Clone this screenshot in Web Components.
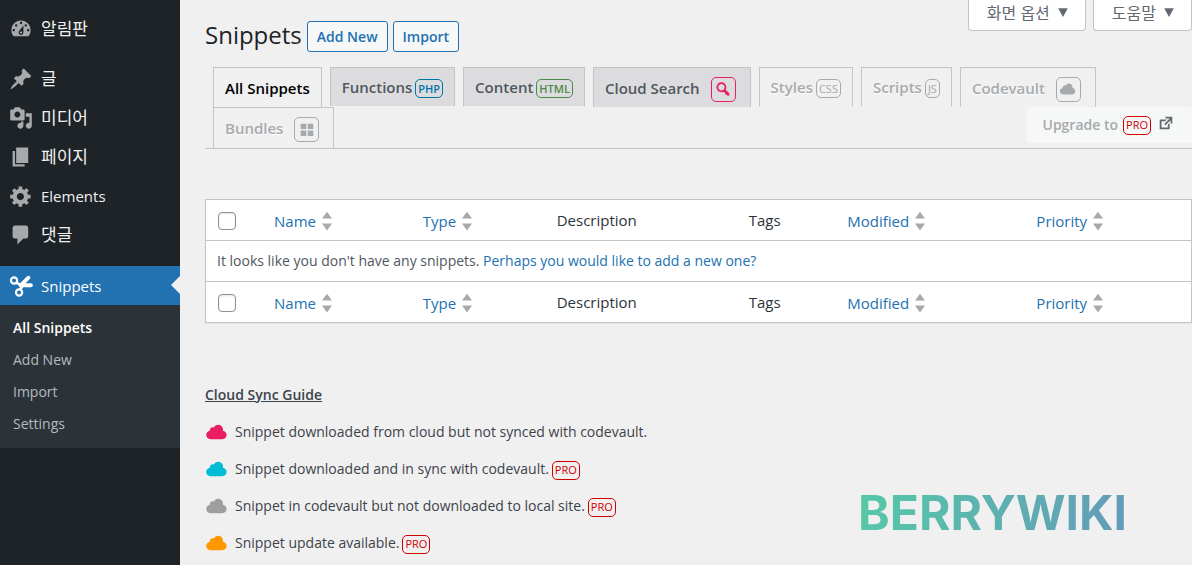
<!DOCTYPE html>
<html lang="ko">
<head>
<meta charset="utf-8">
<meta name="viewport" content="width=device-width, initial-scale=1">
<title>Snippets</title>
<style>
  body { margin: 0; background: #f0f0f1; color: #3c434a; font: 15px/20px "Open Sans", "Noto Sans CJK KR", sans-serif; }
</style>
</head>
<body>
<admin-shell>
  <side-menu slot="menu"></side-menu>
  <snippets-page></snippets-page>
</admin-shell>

<script>
const ICONS = {
  dashboard: '<path d="M3.76 16h12.48c1.1-1.37 1.76-3.11 1.76-5 0-4.42-3.58-8-8-8s-8 3.58-8 8c0 1.89.66 3.63 1.76 5zM10 4c.55 0 1 .45 1 1s-.45 1-1 1-1-.45-1-1 .45-1 1-1zM6 6c.55 0 1 .45 1 1s-.45 1-1 1-1-.45-1-1 .45-1 1-1zm8 0c.55 0 1 .45 1 1s-.45 1-1 1-1-.45-1-1 .45-1 1-1zm-5.37 5.55L12 7v6c0 1.1-.9 2-2 2s-2-.9-2-2c0-.57.24-1.08.63-1.45zM4 10c.55 0 1 .45 1 1s-.45 1-1 1-1-.45-1-1 .45-1 1-1zm12 0c.55 0 1 .45 1 1s-.45 1-1 1-1-.45-1-1 .45-1 1-1zm-5 3c0-.55-.45-1-1-1s-1 .45-1 1 .45 1 1 1 1-.45 1-1z"/>',
  pin: '<path d="M10.44 3.02l1.82-1.82 6.36 6.35-1.83 1.82c-1.05-.68-2.48-.57-3.41.36l-.75.75c-.92.93-1.04 2.35-.35 3.41l-1.83 1.82-2.41-2.41-2.8 2.79c-.42.42-3.38 2.71-3.8 2.29s1.86-3.39 2.28-3.81l2.79-2.79L4.1 9.36l1.83-1.82c1.05.69 2.48.57 3.4-.36l.75-.75c.93-.92 1.05-2.35.36-3.41z"/>',
  media: '<path d="M13 11V4c0-.55-.45-1-1-1h-1.67L9 1H5L3.67 3H2c-.55 0-1 .45-1 1v7c0 .55.45 1 1 1h10c.55 0 1-.45 1-1zM7 4.5c1.38 0 2.5 1.12 2.5 2.5S8.38 9.5 7 9.5 4.5 8.38 4.5 7 5.62 4.5 7 4.5zM14 6h5v10.5c0 1.38-1.12 2.5-2.5 2.5S14 17.88 14 16.5s1.12-2.5 2.5-2.5c.17 0 .34.02.5.05V9h-3V6zm-4 8.05V13h2v3.5c0 1.38-1.12 2.5-2.5 2.5S7 17.88 7 16.5 8.12 14 9.5 14c.17 0 .34.02.5.05z"/>',
  page: '<path d="M6 15V2h10v13H6zm-1 1h8v2H3V5h2v11z"/>',
  gear: '<path d="M18 12h-2.18c-.17.7-.44 1.35-.81 1.93l1.54 1.54-2.1 2.1-1.54-1.54c-.58.36-1.23.63-1.91.79V19H8v-2.18c-.68-.16-1.33-.43-1.91-.79l-1.54 1.54-2.12-2.12 1.54-1.54c-.36-.58-.63-1.23-.79-1.91H1V9.03h2.17c.16-.7.44-1.35.8-1.94L2.43 5.55l2.1-2.1 1.54 1.54c.58-.37 1.24-.64 1.93-.81V2h3v2.18c.68.16 1.33.43 1.91.79l1.54-1.54 2.12 2.12-1.54 1.54c.36.59.64 1.24.8 1.94H18V12zm-8.5 1.5c1.66 0 3-1.34 3-3s-1.34-3-3-3-3 1.34-3 3 1.34 3 3 3z"/>',
  comment: '<path d="M5 2h9c1.1 0 2 .9 2 2v7c0 1.1-.9 2-2 2h-2l-5 5v-5H5c-1.1 0-2-.9-2-2V4c0-1.1.9-2 2-2z"/>',
  scissors: '<g fill="none" stroke="currentColor"><g stroke-width="1.8"><circle cx="4.2" cy="5.4" r="2.6"/><circle cx="8.4" cy="15.4" r="2.6"/></g><g stroke-linecap="round" stroke-width="3.2"><path d="M9.6 9.6L16.2 3.1"/><path d="M11 9.4L18.2 9.4"/></g><path stroke-width="2.2" d="M5.8 7.2L11 9.6M9.2 13.2L11.4 9.8"/></g>',
  cloud: '<path d="M14.9 9c1.8.2 3.1 1.7 3.1 3.5 0 1.9-1.6 3.5-3.5 3.5h-10C2.6 16 1 14.4 1 12.5 1 10.7 2.3 9.3 4.1 9 4 8.9 4 8.7 4 8.5 4 7.1 5.1 6 6.5 6c.3 0 .7.1.9.2C8.1 4.9 9.4 4 11 4c2.2 0 4 1.8 4 4 0 .4-.1.7-.1 1z"/>',
  search: '<path d="M12.14 4.18c1.87 1.87 2.11 4.75.72 6.89.12.1.22.21.36.31.2.16.47.36.81.59.34.24.56.39.66.47.42.31.73.57.94.78.32.32.6.65.84 1 .25.35.44.69.59 1.04.14.35.21.68.18 1-.02.32-.14.59-.36.81s-.49.34-.81.36c-.31.02-.65-.04-.99-.19-.35-.14-.7-.34-1.04-.59-.35-.24-.68-.52-1-.84-.21-.21-.47-.52-.77-.93-.1-.13-.25-.35-.47-.66-.22-.32-.4-.57-.56-.78-.16-.2-.29-.35-.44-.5-2.07 1.09-4.69.76-6.44-.98-2.14-2.15-2.14-5.64 0-7.78 2.15-2.15 5.63-2.15 7.78 0zm-1.41 6.36c1.36-1.37 1.36-3.58 0-4.95-1.37-1.37-3.59-1.37-4.95 0-1.37 1.37-1.37 3.58 0 4.95 1.36 1.37 3.58 1.37 4.95 0z"/>',
  grid: '<path d="M3 3h6.2v6H3zM10.8 3H17v6h-6.200zM3 10.600h6.200v6H3zM10.800 10.600H17v6h-6.200z"/>',
  external: '<path d="M9 3h8v8l-2-1V6.92l-5.6 5.59-1.41-1.41L14.08 5H10zm3 12v-3l2-2v7H3V6h8L9 8H5v7h7z"/>',
  down: '<path d="M4 4h12l-6 11z"/>',
  sort: '<path d="M10 0.800l5 6.800H5zM10 19.400l-5-6.800h10z"/>'
};

function define(name, css, html) {
  const template = document.createElement('template');
  template.innerHTML = `<style>${css}</style>${html}`;
  customElements.define(name, class extends HTMLElement {
    constructor() {
      super();
      this.attachShadow({ mode: 'open' }).append(template.content.cloneNode(true));
    }
  });
}

customElements.define('wp-icon', class extends HTMLElement {
  connectedCallback() {
    const root = this.shadowRoot || this.attachShadow({ mode: 'open' });
    root.innerHTML = `<style>
      :host { display: inline-block; flex: none; width: var(--icon-size, 24px); height: var(--icon-size, 24px); }
      svg { display: block; width: 100%; height: 100%; fill: currentColor; }
    </style><svg viewBox="0 0 20 20" aria-hidden="true">${ICONS[this.getAttribute('name')]}</svg>`;
  }
});

/* Small outlined label such as PHP or PRO; its colour follows the host. */
define('type-badge', `
  :host { display: inline-flex; align-items: center; justify-content: center; box-sizing: border-box; flex: none;
    height: 19px; margin-top: 3px; padding: 0 2px; border: 1px solid currentColor; border-radius: 5px; font-size: 11px; line-height: 16px; font-weight: 400; text-shadow: none; --icon-size: 18px; }
  :host([kind="php"]) { color: #0073aa; font-weight: 600; }
  :host([kind="html"]) { color: #4a8a4a; font-weight: 600; }
  :host([kind="pro"]) { color: #d00000; }
  :host([kind="search"]) { color: #e91e63; }
  :host([square]) { width: 25px; height: 25px; padding: 0; }
`, '<slot></slot>');

define('admin-shell', `
  :host { display: flex; min-height: 100vh; }
  ::slotted(side-menu) { flex: none; }
  main { flex: 1; min-width: 0; }
`, '<slot name="menu"></slot><main><slot></slot></main>');

customElements.define('menu-item', class extends HTMLElement {
  connectedCallback() {
    const root = this.shadowRoot || this.attachShadow({ mode: 'open' });
    root.innerHTML = `<style>
      :host { display: block; color: #a7aaad; font-size: 15px; }
      :host(:lang(ko)) { font-size: 17px; }
      a { display: flex; align-items: center; gap: 8px; height: 39px; padding-left: 9px; color: inherit; text-decoration: none; position: relative; }
      span { color: #f0f0f1; }
      :host([current]) { background: #2271b1; color: #fff; }
      :host([current]) span { color: #fff; }
      :host([current]) a::after { content: ""; position: absolute; right: 0; top: 10px; border: solid transparent; border-width: 9px; border-left-width: 0; border-right-color: #f0f0f1; }
    </style><a href="#"><wp-icon name="${this.getAttribute('icon')}"></wp-icon><span><slot></slot></span></a>`;
  }
});

define('side-menu', `
  :host { display: block; width: 180px; background: #1d2327; }
  nav { padding-top: 9px; }
  .group { margin-bottom: 12px; }
  .group:first-child { margin-bottom: 11px; }
  ul { list-style: none; margin: 0; padding: 7px 0 8px; background: #2c3338; }
  li a { display: block; padding-left: 13px; font-size: 14px; line-height: 32px; color: #b5babe; text-decoration: none; }
  li a[aria-current] { color: #fff; font-weight: 600; }
`, `<nav>
  <div class="group"><menu-item icon="dashboard">알림판</menu-item></div>
  <div class="group">
    <menu-item icon="pin">글</menu-item>
    <menu-item icon="media">미디어</menu-item>
    <menu-item icon="page">페이지</menu-item>
    <menu-item icon="gear" lang="en">Elements</menu-item>
    <menu-item icon="comment">댓글</menu-item>
  </div>
  <menu-item icon="scissors" lang="en" current>Snippets</menu-item>
  <ul>
    <li><a href="#" aria-current="page">All Snippets</a></li>
    <li><a href="#">Add New</a></li>
    <li><a href="#">Import</a></li>
    <li><a href="#">Settings</a></li>
  </ul>
</nav>`);

define('screen-links', `
  :host { display: flex; justify-content: flex-end; gap: 7px; }
  button { display: flex; align-items: center; gap: 5px; height: 31px; padding: 0 14px 5px 18px; background: #fff; border: 1px solid #c3c4c7; border-top: 0; border-radius: 0 0 4px 4px; color: #646970; font: inherit; font-size: 16px; --icon-size: 16px; }
`, `<button type="button">화면 옵션<wp-icon name="down"></wp-icon></button>
<button type="button">도움말<wp-icon name="down"></wp-icon></button>`);

define('page-heading', `
  :host { display: flex; align-items: center; gap: 5px; }
  h1 { margin: 0; padding-bottom: 2px; font-size: 24px; line-height: 30px; font-weight: 400; color: #1d2327; }
  a { box-sizing: border-box; height: 31px; padding: 0 9px; border: 1px solid #2271b1; border-radius: 3px; background: #f6f7f7; color: #2271b1; font-size: 14px; line-height: 30px; font-weight: 600; text-decoration: none; }
`, '<h1>Snippets</h1><a href="#">Add New</a><a href="#">Import</a>');

define('snippet-tabs', `
  :host { display: block; border-bottom: 1px solid #c3c4c7; }
  nav { display: flex; flex-wrap: wrap; align-items: flex-start; column-gap: 8px; padding-left: 8px; }
  a { box-sizing: border-box; display: flex; align-items: center; gap: 3px; height: 39px; padding: 0 11px; border: 1px solid #c3c4c7; border-bottom: 0; background: #dcdcde; color: #50575e; font-size: 15px; font-weight: 600; text-decoration: none; }
  a:has([square]) { gap: 11px; height: 40px; padding-right: 14px; }
  .on { height: 40px; background: #f0f0f1; color: #000; }
  .off { background: transparent; color: #a7aaad; text-shadow: 0 1px 0 #fff; }
  a.last { height: 41px; }
  .upgrade { height: 36px; gap: 5px; margin-left: auto; padding: 0 17px 0 15px; border: 0; border-radius: 3px; background: #f6f7f7; color: #a7aaad; font-size: 14px; --icon-size: 18px; }
  .upgrade type-badge { margin-top: 0; }
  .upgrade wp-icon { color: #646970; margin: 0 0 4px 1px; }
`, `<nav>
  <a href="#" class="on">All Snippets</a>
  <a href="#">Functions<type-badge kind="php">PHP</type-badge></a>
  <a href="#">Content<type-badge kind="html">HTML</type-badge></a>
  <a href="#">Cloud Search<type-badge kind="search" square><wp-icon name="search"></wp-icon></type-badge></a>
  <a href="#" class="off">Styles<type-badge>CSS</type-badge></a>
  <a href="#" class="off">Scripts<type-badge>JS</type-badge></a>
  <a href="#" class="off">Codevault<type-badge square><wp-icon name="cloud"></wp-icon></type-badge></a>
  <a href="#" class="off last">Bundles<type-badge square><wp-icon name="grid"></wp-icon></type-badge></a>
  <a href="#" class="upgrade">Upgrade to<type-badge kind="pro">PRO</type-badge><wp-icon name="external"></wp-icon></a>
</nav>`);

const headCells = `<tr>
  <td class="check"><input type="checkbox" aria-label="Select all"></td>
  <th scope="col"><a href="#">Name<wp-icon name="sort"></wp-icon></a></th>
  <th scope="col"><a href="#">Type<wp-icon name="sort"></wp-icon></a></th>
  <th scope="col">Description</th>
  <th scope="col">Tags</th>
  <th scope="col"><a href="#">Modified<wp-icon name="sort"></wp-icon></a></th>
  <th scope="col"><a href="#">Priority<wp-icon name="sort"></wp-icon></a></th>
</tr>`;

define('snippet-table', `
  :host { display: block; }
  table { width: 100%; table-layout: fixed; border-collapse: separate; border-spacing: 0; background: #fff; border: 1px solid #c3c4c7; box-shadow: 0 1px 1px rgba(0,0,0,.04); box-sizing: border-box; }
  th, td { box-sizing: border-box; height: 40px; padding: 0 10px; text-align: left; font-weight: 400; color: #2c3338; }
  th { font-size: 15px; }
  td { font-size: 14px; }
  thead th, thead td, tbody td { height: 41px; border-bottom: 1px solid #c3c4c7; }
  tbody td { padding: 0 11px; color: #50575e; }
  a { color: #2271b1; text-decoration: none; }
  th a { display: inline-flex; align-items: center; gap: 1px; vertical-align: middle; --icon-size: 20px; }
  wp-icon { color: #a7aaad; }
  .check { padding: 2px 0 0 12px; }
  input { display: block; box-sizing: border-box; appearance: none; width: 18px; height: 18px; margin: 0; border: 1px solid #8c8f94; border-radius: 4px; background: #fff; box-shadow: inset 0 1px 2px rgba(0,0,0,.1); }
`, `<table>
  <colgroup><col style="width:58px"><col style="width:15.1%"><col style="width:13.6%"><col style="width:19.5%"><col style="width:10%"><col style="width:19.2%"><col></colgroup>
  <thead>${headCells}</thead>
  <tbody><tr><td colspan="7">It looks like you don't have any snippets. <a href="#">Perhaps you would like to add a new one?</a></td></tr></tbody>
  <tfoot>${headCells}</tfoot>
</table>`);

define('sync-guide', `
  :host { display: block; font-size: 14px; }
  h2 { margin: 0 0 8px; font-size: 14px; line-height: 20px; font-weight: 600; text-decoration: underline; }
  ul { list-style: none; margin: 0; padding: 0; }
  li { display: flex; align-items: center; height: 37px; gap: 3px; }
  li wp-icon { margin-right: 3px; }
`, `<h2>Cloud Sync Guide</h2>
<ul>
  <li><wp-icon name="cloud" style="color:#e91e63"></wp-icon>Snippet downloaded from cloud but not synced with codevault.</li>
  <li><wp-icon name="cloud" style="color:#00bcd4"></wp-icon>Snippet downloaded and in sync with codevault.<type-badge kind="pro">PRO</type-badge></li>
  <li><wp-icon name="cloud" style="color:#9e9e9e"></wp-icon>Snippet in codevault but not downloaded to local site.<type-badge kind="pro">PRO</type-badge></li>
  <li><wp-icon name="cloud" style="color:#ff9800"></wp-icon>Snippet update available.<type-badge kind="pro">PRO</type-badge></li>
</ul>`);

define('brand-mark', `
  :host { display: block; font: 700 48px/48px Inter, sans-serif; color: transparent; background: linear-gradient(100deg, #55c9a8, #659ab8); -webkit-background-clip: text; background-clip: text; }
`, '<slot></slot>');

define('snippets-page', `
  :host { display: block; padding-left: 25px; }
  screen-links { height: 20px; }
  page-heading { margin-bottom: 15px; }
  snippet-table { margin: 50px 0 62px; }
  .foot { display: flex; justify-content: space-between; align-items: flex-end; }
  brand-mark { margin: 0 65px 24px 0; }
`, `<screen-links></screen-links>
<page-heading></page-heading>
<snippet-tabs></snippet-tabs>
<snippet-table></snippet-table>
<div class="foot"><sync-guide></sync-guide><brand-mark>BERRYWIKI</brand-mark></div>`);
</script>
</body>
</html>
